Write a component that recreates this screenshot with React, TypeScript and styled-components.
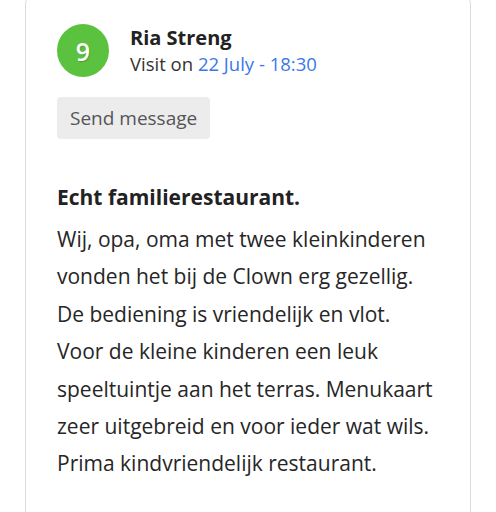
import React from "react";
import styled, { createGlobalStyle } from "styled-components";

const Global = createGlobalStyle`
  html, body { margin: 0; padding: 0; background: #ffffff; }
  body { font-family: "Open Sans", "Noto Sans", sans-serif; color: #222; }
`;

const Page = styled.div`
  padding: 0 25px 0 25px;
  overflow: hidden;
  height: 512px;
`;

const Card = styled.article`
  margin-top: -6px;
  border: 1px solid #dcdcdc;
  border-radius: 10px;
  padding: 29px 31px 40px 31px;
  background: #fff;
  min-height: 600px;
`;

const Header = styled.div`
  display: flex;
  align-items: center;
  gap: 21px;
`;

const Score = styled.div`
  width: 52px;
  height: 53px;
  border-radius: 50%;
  background: #5bc23f;
  color: #fff;
  display: flex;
  align-items: center;
  justify-content: center;
  font-size: 25px;
  font-weight: 600;
  text-shadow: 1px 1px 1px rgba(0, 0, 0, 0.18);
  flex-shrink: 0;
`;

const Who = styled.div`
  display: flex;
  flex-direction: column;
`;

const Name = styled.div`
  font-size: 20px;
  font-weight: 700;
  line-height: 26px;
  color: #222;
`;

const Visit = styled.div`
  font-size: 18.5px;
  line-height: 25px;
  color: #333;
`;

const DateLink = styled.span`
  color: #3b78e7;
`;

const Button = styled.button`
  display: block;
  margin-top: 20px;
  border: none;
  border-radius: 4px;
  background: #ececec;
  color: #555;
  font-family: inherit;
  font-size: 19px;
  height: 42px;
  padding: 0 13px;
  cursor: pointer;
`;

const Title = styled.h3`
  margin: 43px 0 0 0;
  font-size: 21px;
  font-weight: 700;
  line-height: 30px;
  color: #222;
`;

const Body = styled.p`
  margin: 9px 0 0 0;
  font-size: 21px;
  line-height: 37.4px;
  color: #262626;
  max-width: 382px;
`;

export default function App() {
  return (
    <>
      <Global />
      <Page>
        <Card>
          <Header>
            <Score>9</Score>
            <Who>
              <Name>Ria Streng</Name>
              <Visit>
                Visit on <DateLink>22 July - 18:30</DateLink>
              </Visit>
            </Who>
          </Header>
          <Button>Send message</Button>
          <Title>Echt familierestaurant.</Title>
          <Body>
            Wij, opa, oma met twee kleinkinderen vonden het bij de Clown erg
            gezellig. De bediening is vriendelijk en vlot. Voor de kleine
            kinderen een leuk speeltuintje aan het terras. Menukaart zeer
            uitgebreid en voor ieder wat wils. Prima kindvriendelijk restaurant.
          </Body>
        </Card>
      </Page>
    </>
  );
}
